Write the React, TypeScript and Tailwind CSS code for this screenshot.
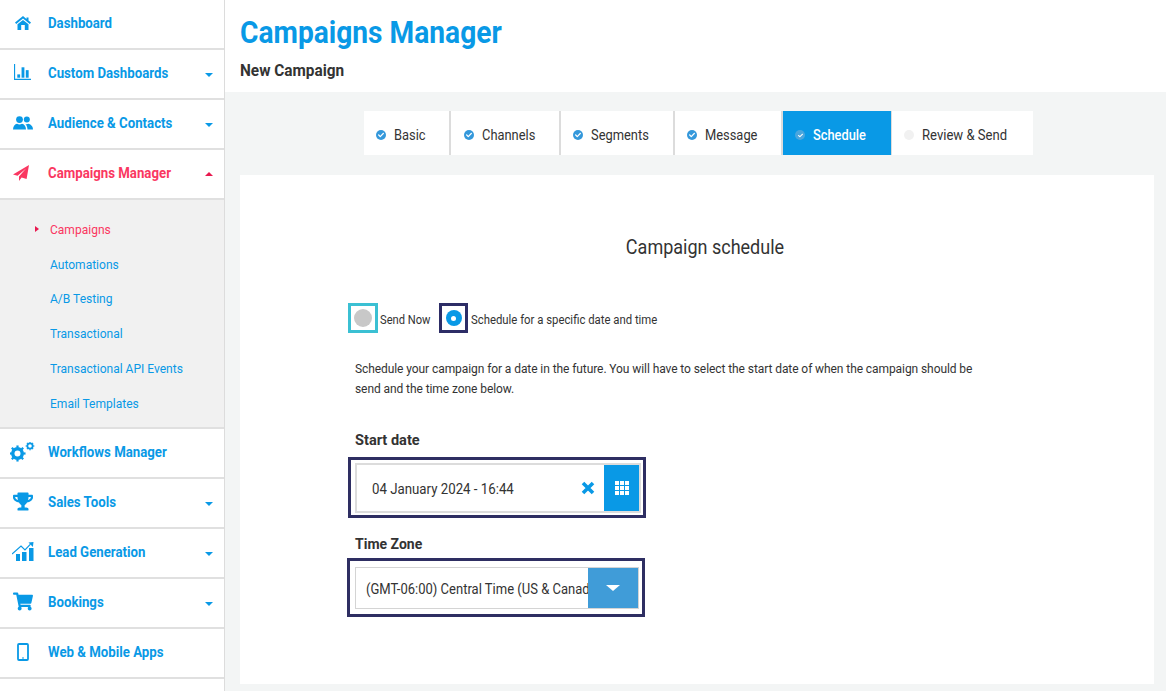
import { ReactNode } from "react";
import { FaTrophy, FaShoppingCart, FaCheck } from "react-icons/fa";

const BLUE = "text-[#0999e6]";

function HomeIcon() {
  return (
    <svg viewBox="0 0 16 14" className="w-[16px] h-[14px]" fill="currentColor">
      <path d="M8 0 0 6.600l1.200 1.300L8 2.500l6.800 5.400L16 6.600 13.500 4.500V1.500h-2v1.400z" />
      <path d="M2.500 8.300 8 3.900l5.500 4.400V14H9.800V9H6.200v5H2.500z" />
    </svg>
  );
}

function ChartIcon() {
  return (
    <svg viewBox="0 0 20 18" className="w-[19px] h-[17px]" fill="currentColor">
      <path d="M1 0h1.200v15.600H19V17H1z" />
      <rect x="4.500" y="11" width="3" height="3.500" />
      <rect x="9" y="3.500" width="3" height="11" />
      <rect x="13.500" y="6.500" width="3" height="8" />
    </svg>
  );
}

function PeopleIcon() {
  return (
    <svg viewBox="0 0 20 14" className="w-[20px] h-[14px]" fill="currentColor">
      <circle cx="6.500" cy="3.600" r="3.400" />
      <path d="M0 13.600c0-3.600 2-5.400 4-5.800 1.500 1 3.500 1 5 0 2 .4 4 2.200 4 5.800z" />
      <circle cx="13.800" cy="3.600" r="3" />
      <path d="M14.500 13.600c0-2.400-.8-4.300-2.200-5.600.9.300 2.100.300 3-.2 2 .4 4.700 2 4.700 5.800z" />
    </svg>
  );
}

function PlaneIcon() {
  return (
    <svg viewBox="0 0 16 16" className="w-[16px] h-[16px]" fill="currentColor">
      <path d="M16 0 0 9.500l4.600 1.300L13 3.500 6 11.600V16l2.600-3.400 5 1.400z" />
    </svg>
  );
}

function GearShape({ cx, cy, r, hole, tooth }: { cx: number; cy: number; r: number; hole: number; tooth: number }) {
  const teeth = [0, 45, 90, 135, 180, 225, 270, 315];
  return (
    <g>
      <circle cx={cx} cy={cy} r={r} fill="currentColor" />
      {teeth.map((a) => (
        <rect
          key={a}
          x={cx - tooth / 2}
          y={cy - r - tooth * 0.7}
          width={tooth}
          height={tooth}
          fill="currentColor"
          transform={`rotate(${a} ${cx} ${cy})`}
        />
      ))}
      <circle cx={cx} cy={cy} r={hole} fill="white" />
    </g>
  );
}

function GearsIcon() {
  return (
    <svg viewBox="0 0 25 20" className="w-[25px] h-[20px]">
      <GearShape cx={7.500} cy={11.500} r={6.500} hole={3} tooth={2.200} />
      <GearShape cx={20} cy={4} r={3.500} hole={1.800} tooth={1.200} />
    </svg>
  );
}

function GrowthIcon() {
  return (
    <svg viewBox="0 0 22 19" className="w-[22px] h-[19px]" fill="currentColor">
      <rect x="4" y="12" width="4" height="7" />
      <rect x="10" y="10" width="4.500" height="9" />
      <rect x="17" y="6" width="4.500" height="13" />
      <path d="M0 12 9 4l4 4 5.500-5.800" fill="none" stroke="currentColor" strokeWidth="1.200" />
      <path d="M16.500 .6 21.500 0l-.6 5z" />
    </svg>
  );
}

function PhoneIcon() {
  return (
    <svg viewBox="0 0 12 18" className="w-[12px] h-[18px]">
      <rect x="1" y="1" width="10" height="16" rx="1" fill="none" stroke="currentColor" strokeWidth="1.800" />
      <rect x="5" y="14.500" width="2" height="1" fill="currentColor" />
    </svg>
  );
}

function Caret({ up }: { up?: boolean }) {
  return up ? (
    <span className="w-0 h-0 border-x-[4px] border-x-transparent border-b-[4px] border-b-[#e8194f]" />
  ) : (
    <span className="w-0 h-0 border-x-[4px] border-x-transparent border-t-[4px] border-t-[#0999e6] mt-[2px]" />
  );
}

type NavRow = { label: string; icon: ReactNode; caret?: boolean };

const topRows: NavRow[] = [
  { label: "Dashboard", icon: <HomeIcon /> },
  { label: "Custom Dashboards", icon: <ChartIcon />, caret: true },
  { label: "Audience & Contacts", icon: <PeopleIcon />, caret: true },
];

const bottomRows: NavRow[] = [
  { label: "Workflows Manager", icon: <GearsIcon /> },
  { label: "Sales Tools", icon: <FaTrophy className="w-[20px] h-[19px]" />, caret: true },
  { label: "Lead Generation", icon: <GrowthIcon />, caret: true },
  { label: "Bookings", icon: <FaShoppingCart className="w-[20px] h-[19px]" />, caret: true },
  { label: "Web & Mobile Apps", icon: <PhoneIcon /> },
];

const subItems = ["Automations", "A/B Testing", "Transactional", "Transactional API Events", "Email Templates"];

function Row({ row }: { row: NavRow }) {
  return (
    <div className={`h-[50px] flex items-center border-b-2 border-[#e0e0e0] bg-white ${BLUE}`}>
      <span className="w-[48px] shrink-0 flex justify-center pr-[3px] -mt-[3px]">{row.icon}</span>
      <span className="flex-1 text-[14px] font-bold -mt-[3px] leading-none whitespace-nowrap">
        <span className="inline-block origin-left scale-x-[0.945]">{row.label}</span>
      </span>
      {row.caret && (
        <span className="flex w-[19px] shrink-0">
          <Caret />
        </span>
      )}
    </div>
  );
}

const tabs = [
  { label: "Basic", w: "w-[87px] pl-[12px]" },
  { label: "Channels", w: "w-[110px] pl-[13px]" },
  { label: "Segments", w: "w-[114px] pl-[12px]" },
  { label: "Message", w: "w-[108px] pl-[12px]" },
];

function Tab({ label, w }: { label: string; w: string }) {
  return (
    <div className={`${w} h-full flex items-center bg-white border-r-2 border-[#dcdcdc] text-[14px] text-[#333]`}>
      <span className="mt-[4px] w-[10px] h-[10px] rounded-full bg-[#3498db] flex items-center justify-center text-white">
        <FaCheck className="w-[6px] h-[6px]" />
      </span>
      <span className="ml-[8px] pt-[4px] inline-block origin-left scale-x-[0.92]">{label}</span>
    </div>
  );
}

export default function App() {
  return (
    <div className="w-[1166px] h-[691px] overflow-hidden flex bg-[#f3f5f5] font-['Roboto',sans-serif]">
      <aside className="w-[225px] shrink-0 h-full bg-white border-r border-[#dcdcdc]">
        {topRows.map((r) => (
          <Row key={r.label} row={r} />
        ))}
        <div className="h-[50px] flex items-center border-b-2 border-[#e0e0e0] bg-white text-[#fa3761]">
          <span className="w-[48px] shrink-0 flex justify-center pr-[7px] -mt-[3px]">
            <PlaneIcon />
          </span>
          <span className="flex-1 text-[14px] font-bold -mt-[3px] leading-none whitespace-nowrap">
            <span className="inline-block origin-left scale-x-[0.945]">Campaigns Manager</span>
          </span>
          <span className="flex w-[19px] shrink-0">
            <Caret up />
          </span>
        </div>
        <div className="h-[229px] bg-[#f1f1f1] border-b-2 border-[#e0e0e0] pt-[13px] text-[13px]">
          <div className="h-[34px] flex items-center text-[#fa3761]">
            <span className="ml-[35px] w-0 h-0 border-y-[3px] border-y-transparent border-l-[4px] border-l-[#e8194f] -mt-[2px]" />
            <span className="ml-[11px] inline-block origin-left scale-x-[0.925]">Campaigns</span>
          </div>
          {subItems.map((s) => (
            <div key={s} className={`h-[34.800px] flex items-center pl-[50px] ${BLUE}`}>
              <span className="inline-block origin-left scale-x-[0.925]">{s}</span>
            </div>
          ))}
        </div>
        {bottomRows.map((r) => (
          <Row key={r.label} row={r} />
        ))}
      </aside>

      <main className="flex-1 min-w-0">
        <header className="h-[92px] bg-white pl-[15px] pt-[12px]">
          <h1 className={`text-[32px] leading-[40px] font-bold origin-left scale-x-[0.88] ${BLUE}`}>Campaigns Manager</h1>
          <h2 className="mt-[9px] text-[16px] leading-[20px] font-bold text-[#333] origin-left scale-x-[0.96]">New Campaign</h2>
        </header>

        <div className="h-[44px] mt-[19px] ml-[139px] w-[669px] flex bg-white">
          {tabs.map((t) => (
            <Tab key={t.label} {...t} />
          ))}
          <div className="w-[109px] h-full flex items-center pl-[12px] bg-[#0999e6] text-white text-[14px] font-medium border-r border-[#dcdcdc]">
            <span className="mt-[4px] w-[10px] h-[10px] rounded-full bg-[#4aa6de] flex items-center justify-center">
              <FaCheck className="w-[5px] h-[5px]" />
            </span>
            <span className="ml-[8px] pt-[4px] inline-block origin-left scale-x-[0.915]">Schedule</span>
          </div>
          <div className="flex-1 h-full flex items-center pl-[12px] text-[14px] text-[#333]">
            <span className="mt-[4px] w-[10px] h-[10px] rounded-full bg-[#f1f1f1]" />
            <span className="ml-[8px] pt-[4px] inline-block origin-left scale-x-[0.934]">Review &amp; Send</span>
          </div>
        </div>

        <section className="mt-[20px] ml-[15px] w-[914px] h-[509px] bg-white pl-[107px]">
          <h3 className="pt-[60px] text-center w-[716px] text-[20px] leading-[24px] text-[#333] scale-x-[0.9]">Campaign schedule</h3>

          <div className="mt-[44px] flex items-center text-[12px] text-[#333]">
            <span className="ml-[1px] w-[30px] h-[30px] border-[3px] border-[#3bc0d3] flex items-center justify-center">
              <span className="w-[18px] h-[18px] rounded-full bg-[#c8c8c8]" />
            </span>
            <span className="ml-[2px] pt-[3px] inline-block origin-left scale-x-[0.93]">Send Now</span>
            <span className="ml-[5px] w-[29px] h-[30px] border-[3px] border-[#2d2d66] flex items-center justify-center">
              <span className="w-[16px] h-[16px] rounded-full bg-[#0999e6] flex items-center justify-center">
                <span className="w-[5px] h-[5px] rounded-full bg-white" />
              </span>
            </span>
            <span className="ml-[3px] pt-[3px] inline-block origin-left scale-x-[0.945]">Schedule for a specific date and time</span>
          </div>

          <p className="mt-[27px] ml-[8px] w-[630px] text-[12px] leading-[19.500px] text-[#333] tracking-[-0.08px]">
            Schedule your campaign for a date in the future. You will have to select the start date of when the campaign should be send and the time zone below.
          </p>

          <div className="mt-[31px] ml-[8px] text-[14px] leading-[20px] font-bold text-[#333] origin-left scale-x-[1.04]">Start date</div>
          <div className="mt-[7px] ml-[1px] w-[298px] h-[61px] border-[3px] border-[#2e2e62] bg-white pl-[4px] pr-[2px] pt-[3px] pb-[2px]">
            <div className="h-full flex items-stretch border-[2px] border-[#dcdcdc]">
              <span className="flex-1 flex items-center pl-[15px] pt-[3px] text-[14px] text-[#333] whitespace-nowrap">
                <span className="inline-block origin-left scale-x-[0.947]">04 January 2024 - 16:44</span>
              </span>
              <span className={`w-[32px] flex items-center justify-center ${BLUE}`}>
                <svg viewBox="0 0 14 14" className="w-[14px] h-[14px]" fill="none" stroke="currentColor" strokeWidth="3.600">
                  <path d="m2 2 10 10M12 2 2 12" />
                </svg>
              </span>
              <span className="w-[35px] bg-[#0999e6] flex items-center justify-center">
                <span className="grid grid-cols-3 gap-[1px]">
                  {[1, 2, 3, 4, 5, 6, 7, 8, 9].map((n) => (
                    <span key={n} className="w-[4px] h-[4px] bg-white" />
                  ))}
                </span>
              </span>
            </div>
          </div>

          <div className="mt-[16px] ml-[8px] text-[14px] leading-[20px] font-bold text-[#333]">Time Zone</div>
          <div className="mt-[4px] w-[298px] h-[59px] border-[3px] border-[#2e2e62] bg-white pl-[5px] pr-[3px] pt-[6px] pb-[5px]">
            <div className="h-full flex items-stretch border border-[#d4d4d4]">
              <span className="flex-1 min-w-0 overflow-hidden whitespace-nowrap flex items-center pl-[10px] pt-[2px] text-[14px] text-[#333]">
                <span className="inline-block origin-left scale-x-[0.93]">(GMT-06:00) Central Time (US &amp; Canada)</span>
              </span>
              <span className="w-[50px] shrink-0 bg-[#409cd8] flex items-center justify-center">
                <span className="w-0 h-0 border-x-[7px] border-x-transparent border-t-[6px] border-t-white" />
              </span>
            </div>
          </div>
        </section>
      </main>
    </div>
  );
}
